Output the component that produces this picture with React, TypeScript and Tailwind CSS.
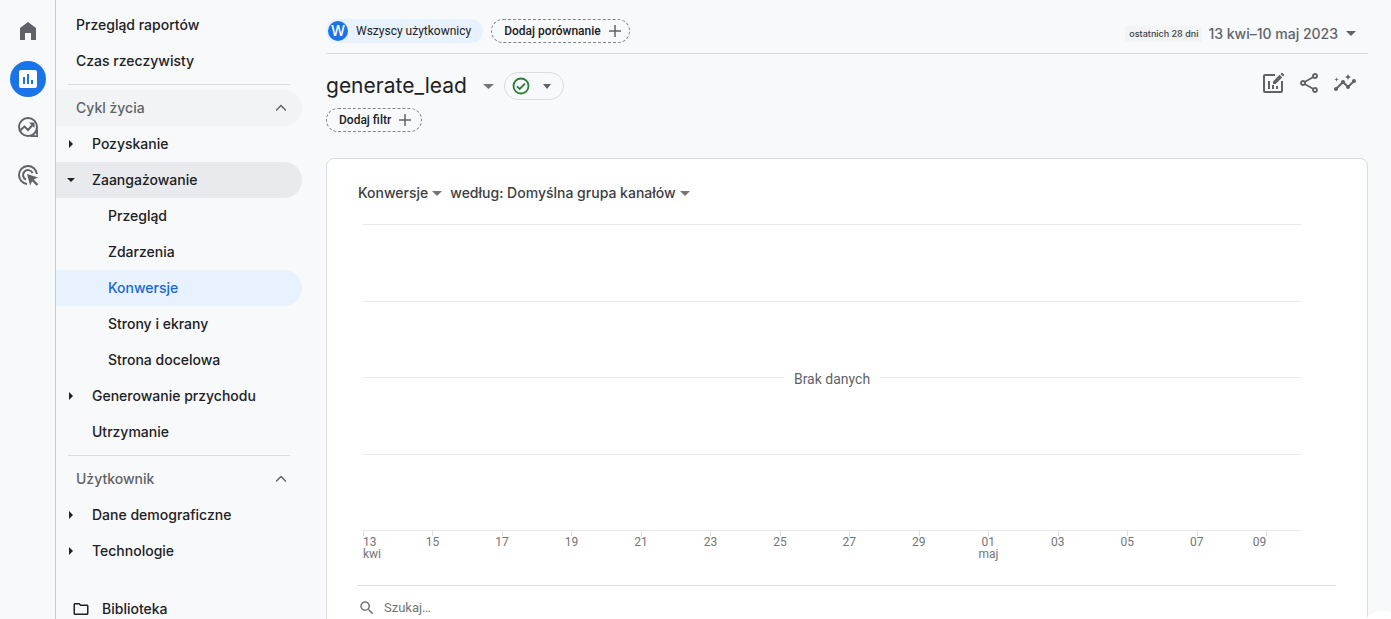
import { ReactNode } from "react";
import { MdInsights, MdOutlineFolder, MdOutlineShare, MdSearch } from "react-icons/md";

type NavItem = {
  label: string;
  level: 1 | 2;
  state?: "open" | "closed";
  active?: boolean;
};

const lifecycle: NavItem[] = [
  { label: "Pozyskanie", level: 1, state: "closed" },
  { label: "Zaangażowanie", level: 1, state: "open" },
  { label: "Przegląd", level: 2 },
  { label: "Zdarzenia", level: 2 },
  { label: "Konwersje", level: 2, active: true },
  { label: "Strony i ekrany", level: 2 },
  { label: "Strona docelowa", level: 2 },
  { label: "Generowanie przychodu", level: 1, state: "closed" },
  { label: "Utrzymanie", level: 1 },
];

const user: NavItem[] = [
  { label: "Dane demograficzne", level: 1, state: "closed" },
  { label: "Technologie", level: 1, state: "closed" },
];

const days = ["13", "15", "17", "19", "21", "23", "25", "27", "29", "01", "03", "05", "07", "09"];
const months: Record<string, string> = { "13": "kwi", "01": "maj" };

function HomeIcon() {
  return (
    <svg width="24" height="24" viewBox="0 0 24 24" fill="#5f6368">
      <path d="M4 21V9l8-6 8 6v12h-5v-7H9v7z" />
    </svg>
  );
}

function ReportsIcon() {
  return (
    <svg width="24" height="24" viewBox="0 0 24 24">
      <rect x="3" y="3" width="18" height="18" rx="2" fill="#fff" />
      <path d="M7 10h2v7H7zM11 7h2v10h-2zM15 13h2v4h-2z" fill="#1a73e8" />
    </svg>
  );
}

function ExploreIcon() {
  return (
    <svg width="24" height="24" viewBox="0 0 24 24" fill="none" stroke="#5f6368" strokeWidth="2">
      <circle cx="12" cy="12" r="9" />
      <path d="M22 12v10H12c4.500-.5 9-4 10-10z" fill="#5f6368" stroke="none" />
      <path d="M4 15.500l4.500-4 3.500 3.500 5-5.500" />
      <path d="M13 7.500h5.500V13z" fill="#5f6368" stroke="none" />
      <circle cx="19.500" cy="19.500" r="1" fill="#f8f9fb" stroke="none" />
    </svg>
  );
}

function AdsIcon() {
  return (
    <svg width="24" height="24" viewBox="0 0 24 24" fill="none" stroke="#5f6368" strokeWidth="2">
      <path d="M11 20.950A9 9 0 1 1 20.950 11" />
      <path d="M10 16.600A5 5 0 1 1 16.600 10" />
      <path d="M11 11l11 3.600-4.300 2 4.600 4.600-1.600 1.600-4.600-4.600-2 4.300z" fill="#5f6368" stroke="none" />
    </svg>
  );
}

function EditChartIcon() {
  return (
    <svg width="24" height="24" viewBox="0 0 24 24" fill="none" stroke="#5f6368" strokeWidth="2">
      <path d="M14 4H4a1 1 0 0 0-1 1v15a1 1 0 0 0 1 1h16a1 1 0 0 0 1-1V10" />
      <path d="M8 10v8M12 14v4M16 15v3" />
      <path d="M12 13v-2.600l6.600-6.600 2.600 2.600L14.600 13zM19.400 3l1-1a.8.8 0 0 1 1.100 0l1.500 1.500a.8.8 0 0 1 0 1.100l-1 1z" fill="#5f6368" stroke="none" />
    </svg>
  );
}

function PlusIcon() {
  return (
    <svg width="12" height="12" viewBox="0 0 12 12" fill="none" stroke="#5f6368" strokeWidth="1.500">
      <path d="M6 0v12M0 6h12" />
    </svg>
  );
}

function CheckIcon() {
  return (
    <svg width="18" height="18" viewBox="0 0 18 18" fill="none" stroke="#2a7d36" strokeWidth="1.800">
      <circle cx="9" cy="9" r="7.500" />
      <path d="M5 9.300l2.700 2.700L13 6.700" />
    </svg>
  );
}

function Caret({ width = 10 }: { width?: number }) {
  return (
    <svg width={width} height="5" viewBox="0 0 10 5" preserveAspectRatio="none" fill="currentColor">
      <path d="M0 0h10L5 5z" />
    </svg>
  );
}

function RailButton({ label, active, children }: { label: string; active?: boolean; children: ReactNode }) {
  return (
    <button
      aria-label={label}
      className={`flex size-9 items-center justify-center rounded-full ${active ? "bg-[#1a73e8]" : ""}`}
    >
      {children}
    </button>
  );
}

function NavRow({ item }: { item: NavItem }) {
  const color = item.active
    ? "bg-[#e8f2ff] text-[#1967d2]"
    : item.state === "open"
      ? "bg-[#e8eaed]"
      : "";
  return (
    <a href="#" className={`flex h-9 items-center rounded-r-full pl-2 ${color}`}>
      <span className={`flex shrink-0 ${item.level === 2 ? "w-11" : "w-7"}`}>
        {item.state && (
          <svg width="14" height="14" viewBox="0 0 14 14" fill="#202124">
            {item.state === "open" ? <path d="M3 5h8l-4 4z" /> : <path d="M5 3v8l4-4z" />}
          </svg>
        )}
      </span>
      {item.label}
    </a>
  );
}

function SectionHeader({ label, shaded }: { label: string; shaded?: boolean }) {
  return (
    <button
      className={`flex h-9 w-full items-center justify-between rounded-r-full pr-4 pl-5 text-[#5f6368] ${shaded ? "bg-[#f1f3f4]" : ""}`}
    >
      {label}
      <svg width="10" height="10" viewBox="0 0 10 10" fill="none" stroke="#5f6368" strokeWidth="1.500">
        <path d="M0 7.500l5-5 5 5" />
      </svg>
    </button>
  );
}

function Divider() {
  return <hr className="mx-3 mt-[5px] mb-[5px] border-[#dadce0]" />;
}

function Chart() {
  return (
    <svg className="h-[345px] w-full overflow-visible" role="img" aria-label="Brak danych">
      {[0, 77, 153, 230, 306].map((y) => (
        <line key={y} x1="0" x2="100%" y1={y + 0.5} y2={y + 0.5} stroke="#e8eaed" shapeRendering="crispEdges" />
      ))}
      <svg x="50%" y="140" overflow="visible">
        <rect x="-48" width="96" height="28" fill="#fff" />
        <text y="20" textAnchor="middle" fontSize="14" fill="#5f6368">
          Brak danych
        </text>
      </svg>
      {days.map((day, i) => {
        const first = i === 0;
        const last = i === days.length - 1;
        const anchor = first ? "start" : last ? "end" : "middle";
        return (
          <svg key={day} x={`${(i * 200) / 27}%`} y="306" overflow="visible" fontSize="12" fill="#757575">
            <line x1="0.5" x2="0.5" y1="0" y2="6" stroke="#e0e0e0" shapeRendering="crispEdges" />
            <text x="0" y="16" textAnchor={anchor}>
              {day}
            </text>
            <text x="0" y="28" textAnchor={anchor}>
              {months[day]}
            </text>
          </svg>
        );
      })}
    </svg>
  );
}

export default function App() {
  return (
    <div className="relative flex h-screen overflow-hidden bg-[#f8f9fb] font-['Roboto',sans-serif] text-[#202124]">
      <nav className="flex w-14 shrink-0 flex-col items-center gap-3 border-r border-[#c8cacd] pt-[13px]">
        <RailButton label="Strona główna">
          <HomeIcon />
        </RailButton>
        <RailButton label="Raporty" active>
          <ReportsIcon />
        </RailButton>
        <RailButton label="Eksploracja">
          <ExploreIcon />
        </RailButton>
        <RailButton label="Reklama">
          <AdsIcon />
        </RailButton>
      </nav>

      <aside className="w-[246px] shrink-0 pt-[7px] font-['Inter',sans-serif] text-sm font-medium">
        <a href="#" className="flex h-9 items-center pl-5">
          Przegląd raportów
        </a>
        <a href="#" className="flex h-9 items-center pl-5">
          Czas rzeczywisty
        </a>
        <Divider />
        <SectionHeader label="Cykl życia" shaded />
        {lifecycle.map((item) => (
          <NavRow key={item.label} item={item} />
        ))}
        <Divider />
        <SectionHeader label="Użytkownik" />
        {user.map((item) => (
          <NavRow key={item.label} item={item} />
        ))}
        <a href="#" className="mt-[22px] flex h-9 items-center gap-3 pl-4">
          <MdOutlineFolder size={18} />
          Biblioteka
        </a>
      </aside>

      <main className="ml-6 min-w-0 flex-1 pr-[23px]">
        <header className="flex h-[54px] items-center justify-between border-b border-[#dadce0] pt-2">
          <div className="flex items-center gap-2 text-xs font-medium">
            <button className="flex h-6 items-center gap-2 rounded-full bg-[#e8f2ff] pr-3 pl-0.5 font-normal">
              <span className="flex size-5 items-center justify-center rounded-full bg-[#1a73e8] font-['Inter',sans-serif] text-sm font-medium text-white">
                W
              </span>
              Wszyscy użytkownicy
            </button>
            <button className="flex h-6 items-center gap-2 rounded-full border border-dashed border-[#80868b] pr-2 pl-3">
              Dodaj porównanie
              <PlusIcon />
            </button>
          </div>
          <button className="flex items-center pt-1.5 pr-3 text-[#5f6368]">
            <span className="bg-[#f1f3f4] px-1 font-['Inter',sans-serif] text-[9px] leading-4 font-medium text-[#3c4043]">
              ostatnich 28 dni
            </span>
            <span className="mr-2 ml-1.5 font-['Inter',sans-serif] text-sm font-medium">13 kwi–10 maj 2023</span>
            <Caret />
          </button>
        </header>

        <div className="flex justify-between pt-[18px]">
          <div>
            <div className="flex h-7 items-center">
              <h1 className="font-['Inter',sans-serif] text-[21px] leading-7">generate_lead</h1>
              <button aria-label="Zmień zdarzenie" className="mr-2.5 ml-4 text-[#757575]">
                <Caret width={11} />
              </button>
              <button
                aria-label="Jakość danych"
                className="flex h-7 w-15 items-center justify-between rounded-full border border-[#dadce0] pr-3 pl-[7px] text-[#5f6368]"
              >
                <CheckIcon />
                <Caret width={8} />
              </button>
            </div>
            <button className="mt-2 flex h-6 items-center gap-2 rounded-full border border-dashed border-[#80868b] pr-2.5 pl-3 text-xs font-medium">
              Dodaj filtr
              <PlusIcon />
            </button>
          </div>
          <div className="-mt-px flex h-6 gap-3 pr-[11px] text-[#5f6368]">
            <button aria-label="Dostosuj raport">
              <EditChartIcon />
            </button>
            <button aria-label="Udostępnij">
              <MdOutlineShare size={24} />
            </button>
            <button aria-label="Statystyki">
              <MdInsights size={24} />
            </button>
          </div>
        </div>

        <section className="mt-[26px] rounded-lg border border-[#dadce0] bg-white px-[31px] pt-6 pb-10">
          <div className="flex h-5 items-center gap-2 font-['Inter',sans-serif] text-sm font-medium text-[#3c4043]">
            <button className="flex items-center gap-1">
              Konwersje
              <span className="flex text-[#757575]">
                <Caret />
              </span>
            </button>
            <button className="flex items-center gap-1">
              według: Domyślna grupa kanałów
              <span className="flex text-[#757575]">
                <Caret />
              </span>
            </button>
          </div>
          <div className="mt-[21px] mb-4 pr-[35px] pl-[5px]">
            <Chart />
          </div>
          <label className="flex h-11 items-center gap-2 border-t border-[#dadce0] text-[#757575]">
            <MdSearch size={18} aria-label="Szukaj" />
            <input
              type="search"
              placeholder="Szukaj…"
              className="flex-1 bg-transparent text-[13px] outline-none placeholder:text-[#757575]"
            />
          </label>
        </section>
      </main>

      <button
        aria-label="Pomoc"
        className="absolute -right-4 -bottom-10 size-12 rounded-full bg-white shadow-md"
      />
    </div>
  );
}
